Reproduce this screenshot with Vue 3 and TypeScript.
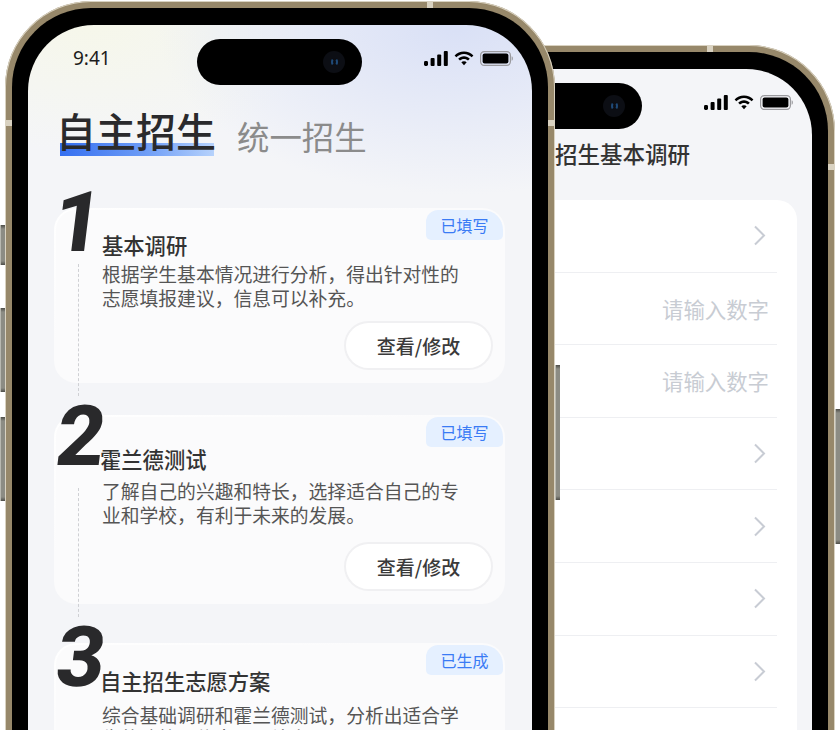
<script setup lang="ts">
interface Step {
  no: string
  title: string
  desc: string[]
  badge: string
  action: boolean
}

const steps: Step[] = [
  { no: '1', title: '基本调研', desc: ['根据学生基本情况进行分析，得出针对性的', '志愿填报建议，信息可以补充。'], badge: '已填写', action: true },
  { no: '2', title: '霍兰德测试', desc: ['了解自己的兴趣和特长，选择适合自己的专', '业和学校，有利于未来的发展。'], badge: '已填写', action: true },
  { no: '3', title: '自主招生志愿方案', desc: ['综合基础调研和霍兰德测试，分析出适合学', '生的院校，信息可以补充。'], badge: '已生成', action: false }
]

const rows = ['arrow', 'input', 'input', 'arrow', 'arrow', 'arrow', 'arrow', 'arrow']
</script>

<template>
  <div class="stage">
    <!-- back phone -->
    <section class="phone phone-back">
      <i class="band band-top"></i>
      <i class="band band-side band-left"></i>
      <i class="band band-side band-right"></i>
      <i class="key key-power"></i>
      <div class="bezel">
        <div class="screen screen-plain">
          <div class="island"><span class="lens"><b></b></span></div>
          <header class="status">
            <span class="time">9:41</span>
            <span class="status-icons">
              <svg width="24" height="15" viewBox="0 0 24 15"><rect x="0" y="10" width="4" height="5" rx="1.4"/><rect x="6.6" y="7" width="4" height="8" rx="1"/><rect x="13.2" y="3.5" width="4" height="11.5" rx="1"/><rect x="19.8" y="0" width="4" height="15" rx="1"/></svg>
              <svg width="20" height="15" viewBox="0 0 20 15"><path d="M10 .5C6.3.5 3 2 .6 4.4l1.7 1.9C4.3 4.300 7 3 10 3s5.700 1.300 7.700 3.300l1.700-1.900C17 2 13.700.5 10 .5z"/><path d="M10 5.300c-2.300 0-4.300.9-5.800 2.400L6 9.600c1-1 2.400-1.600 4-1.600s3 .6 4 1.600l1.800-1.900c-1.500-1.500-3.500-2.400-5.800-2.400z"/><path d="M10 10.200c-1.100 0-2 .4-2.700 1.100l2.700 3 2.700-3c-.7-.7-1.600-1.100-2.700-1.100z"/></svg>
              <svg width="33" height="15" viewBox="0 0 33 15"><rect x=".6" y=".6" width="29.800" height="13.800" rx="3.600" fill="none" stroke="#9a9a9e" stroke-width="1.200"/><rect x="2.600" y="2.600" width="25.800" height="9.800" rx="2"/><path d="M31.600 5.200c.8.300 1.300 1.200 1.300 2.300s-.5 2-1.300 2.300z" fill="#9a9a9e"/></svg>
            </span>
          </header>
          <h2 class="page-title">自主招生基本调研</h2>
          <div class="form-card">
            <div v-for="(row, i) in rows" :key="i" class="form-row">
              <span v-if="row === 'input'" class="placeholder">请输入数字</span>
              <svg v-else class="chev" width="13" height="21" viewBox="0 0 13 21"><path d="M2 1.500l9 9-9 9" fill="none" stroke="#c8ccd4" stroke-width="2"/></svg>
            </div>
          </div>
        </div>
      </div>
    </section>

    <!-- front phone -->
    <section class="phone phone-front">
      <i class="band band-top"></i>
      <i class="band band-side band-left"></i>
      <i class="band band-side band-right"></i>
      <i class="key key-mute"></i>
      <i class="key key-up"></i>
      <i class="key key-down"></i>
      <i class="key key-power"></i>
      <div class="bezel">
        <div class="screen screen-tint">
          <div class="island"><span class="lens"><b></b></span></div>
          <header class="status">
            <span class="time">9:41</span>
            <span class="status-icons">
              <svg width="24" height="15" viewBox="0 0 24 15"><rect x="0" y="10" width="4" height="5" rx="1.4"/><rect x="6.6" y="7" width="4" height="8" rx="1"/><rect x="13.2" y="3.5" width="4" height="11.5" rx="1"/><rect x="19.8" y="0" width="4" height="15" rx="1"/></svg>
              <svg width="20" height="15" viewBox="0 0 20 15"><path d="M10 .5C6.3.5 3 2 .6 4.4l1.7 1.9C4.3 4.300 7 3 10 3s5.700 1.300 7.700 3.300l1.700-1.900C17 2 13.700.5 10 .5z"/><path d="M10 5.300c-2.300 0-4.300.9-5.800 2.400L6 9.600c1-1 2.400-1.600 4-1.600s3 .6 4 1.600l1.800-1.900c-1.500-1.500-3.500-2.400-5.800-2.400z"/><path d="M10 10.200c-1.100 0-2 .4-2.700 1.100l2.700 3 2.700-3c-.7-.7-1.600-1.100-2.700-1.100z"/></svg>
              <svg width="33" height="15" viewBox="0 0 33 15"><rect x=".6" y=".6" width="29.800" height="13.800" rx="3.600" fill="none" stroke="#9a9a9e" stroke-width="1.200"/><rect x="2.600" y="2.600" width="25.800" height="9.800" rx="2"/><path d="M31.600 5.200c.8.300 1.300 1.200 1.300 2.300s-.5 2-1.300 2.300z" fill="#9a9a9e"/></svg>
            </span>
          </header>

          <nav class="tabs">
            <span class="tab-active">自主招生</span>
            <span class="tab">统一招生</span>
          </nav>

          <div class="steps">
            <article v-for="(s, i) in steps" :key="s.no" class="step" :class="`step-${i + 1}`">
              <span class="step-no">{{ s.no }}</span>
              <span v-if="i < 2" class="dash"></span>
              <div class="card">
                <span class="badge">{{ s.badge }}</span>
                <h3 class="card-title">{{ s.title }}</h3>
                <p class="card-desc"><span v-for="line in s.desc" :key="line">{{ line }}</span></p>
                <div v-if="s.action" class="card-foot"><button class="pill">查看/修改</button></div>
              </div>
            </article>
          </div>
        </div>
      </div>
    </section>
  </div>
</template>

<style>
html, body { margin: 0; background: #fff; }
</style>

<style scoped>
.stage {
  position: relative;
  width: 840px;
  height: 730px;
  overflow: hidden;
  background: #fff;
  font-family: "Noto Sans CJK SC", "Noto Sans", sans-serif;
  color: #2b2b2b;
}
.phone {
  position: absolute;
  box-sizing: border-box;
  width: 550px;
  height: 1000px;
  padding: 7px;
  border-radius: 86px;
  background: #97886a;
  box-shadow: inset 0 0 0 1px #d9d2c1;
}
.phone-front { left: 5px; top: 1px; z-index: 2; }
.phone-back { left: 285px; top: 45px; z-index: 1; }
.bezel {
  height: 100%;
  box-sizing: border-box;
  padding: 17px 16px;
  border-radius: 79px;
  background: #000;
}
.screen {
  position: relative;
  height: 100%;
  border-radius: 66px;
  overflow: hidden;
}
.screen-plain { background: #f4f5f8; }
.screen-tint {
  background:
    radial-gradient(300px 170px at 85% 0, #d9e0f6 0, rgba(217, 224, 246, 0) 100%),
    radial-gradient(240px 130px at 12% 0, #f6f7ea 0, rgba(246, 247, 234, 0) 100%),
    #f4f5f8;
}
.band { position: absolute; background: #d9d2c1; z-index: 2; }
.band-top { left: 422px; top: 1px; width: 6px; height: 6px; }
.band-side { top: 119px; width: 7px; height: 6px; }
.band-left { left: 0; }
.band-right { right: 0; }
.key {
  position: absolute;
  width: 5px;
  background: linear-gradient(#4d4d48 0, #8c8c84 4px, #8c8c84 calc(100% - 4px), #4d4d48 100%);
  box-shadow: inset 1px 0 0 #b8b8b0;
}
.key-mute { left: -5px; top: 224px; height: 40px; }
.key-up { left: -5px; top: 307px; height: 84px; }
.key-down { left: -5px; top: 416px; height: 84px; }
.key-power { right: -5px; top: 364px; height: 135px; }

.island {
  position: absolute;
  left: 169px;
  top: 14px;
  width: 165px;
  height: 46px;
  border-radius: 23px;
  background: #000;
  display: flex;
  align-items: center;
  justify-content: flex-end;
  padding-right: 17px;
  box-sizing: border-box;
  z-index: 2;
}
.lens {
  width: 22px;
  height: 22px;
  border-radius: 50%;
  background: #0c0e14;
  display: flex;
  align-items: center;
  justify-content: center;
}
.lens b { width: 7px; height: 8px; border-radius: 50%; border: 2px solid #1f4a78; border-top-color: #0c0e14; border-bottom-color: #0c0e14; box-sizing: border-box; }

.status {
  display: flex;
  align-items: center;
  justify-content: space-between;
  height: 22px;
  padding: 22px 19px 0 45px;
}
.time {
  font-family: "Noto Sans", sans-serif;
  font-size: 19px;
  line-height: 22px;
  color: #1c1c1c;
}
.status-icons { display: flex; align-items: center; gap: 6px; }
.status-icons svg { display: block; fill: #000; }

.tabs {
  display: flex;
  align-items: flex-start;
  gap: 21px;
  padding: 36px 0 0 28px;
}
.tab {
  margin-top: 9px;
  font-size: 32.4px;
  line-height: 44px;
  color: #8b8b8b;
}
.tab-active {
  position: relative;
  z-index: 0;
  font-size: 40px;
  line-height: 50px;
  font-weight: 500;
  color: #2a2a2c;
}
.tab-active::after {
  content: "";
  position: absolute;
  z-index: -1;
  left: 3.5px;
  right: 2px;
  bottom: -1px;
  height: 13px;
  background: linear-gradient(90deg, #356ff0 0, #6d9cf6 55%, #b6d2fc 100%);
}

.steps { padding: 0 27px 0 26px; }
.step { position: relative; }
.step-1 { margin-top: 50px; }
.step-2 { margin-top: 32px; }
.step-3 { margin-top: 39px; }
.step-no {
  position: absolute;
  z-index: 2;
  left: 3px;
  font-family: Roboto, "Liberation Sans", sans-serif;
  font-weight: 800;
  font-size: 84px;
  line-height: 84px;
  color: #29292b;
  transform: skewX(-7deg);
}
.step-1 .step-no { top: -27px; left: 0; }
.step-2 .step-no { top: -20px; }
.step-3 .step-no { top: -27px; }
.dash {
  position: absolute;
  z-index: 1;
  left: 24px;
  width: 0;
  border-left: 1px dashed #cfd0d4;
}
.step-1 .dash { top: 56px; height: 132px; }
.step-2 .dash { top: 73px; height: 129px; }

.card {
  position: relative;
  border: 2px solid transparent;
  border-radius: 22px;
  background:
    linear-gradient(#fbfbfc, #fbfbfc) padding-box,
    linear-gradient(160deg, #fff, #fbfbfc 40%) border-box;
}
.step-1 .card { padding: 21px 10px 11px 46px; }
.step-2 .card { padding: 28px 10px 11px 44px; }
.step-3 .card { padding: 22px 10px 11px 44px; }
.badge {
  position: absolute;
  right: 0;
  top: 0;
  width: 77px;
  height: 30px;
  border-radius: 12px 20px 5px 5px;
  background: #e5f0ff;
  color: #3a7bf5;
  font-size: 16px;
  line-height: 30px;
  text-align: center;
}
.card-title {
  margin: 0;
  font-size: 21.3px;
  line-height: 28px;
  font-weight: 500;
  color: #333;
}
.card-desc {
  margin: 3px 0 0;
  font-size: 18.8px;
  line-height: 23.5px;
  color: #555;
  white-space: nowrap;
}
.step-2 .card-desc { margin-top: 6px; padding-left: 2px; line-height: 24px; }
.step-3 .card-desc { margin-top: 8px; padding-left: 2px; line-height: 23px; }
.card-desc span { display: block; }
.card-foot { display: flex; justify-content: flex-end; margin-top: 12px; }
.step-2 .card-foot { margin-top: 15px; }
.pill {
  width: 149px;
  height: 49px;
  padding: 0;
  border: 2px solid #f0f0f2;
  border-radius: 25px;
  background: #fff;
  font-family: inherit;
  font-size: 19px;
  font-weight: 500;
  color: #3a3a3a;
}

.page-title {
  margin: 0;
  padding: 25px 0 0 202px;
  font-size: 22.5px;
  line-height: 30px;
  font-weight: 500;
  color: #333;
}
.form-card {
  margin: 32px 15px 0;
  padding: 0 20px;
  border-radius: 20px;
  background: #fff;
}
.form-row {
  display: flex;
  align-items: center;
  justify-content: flex-end;
  height: 72.6px;
  box-sizing: border-box;
  border-bottom: 1px solid #eeeff2;
}
.placeholder { font-size: 21.4px; color: #c8ccd3; margin-right: 8px; }
.chev { margin-right: 11px; }
</style>
